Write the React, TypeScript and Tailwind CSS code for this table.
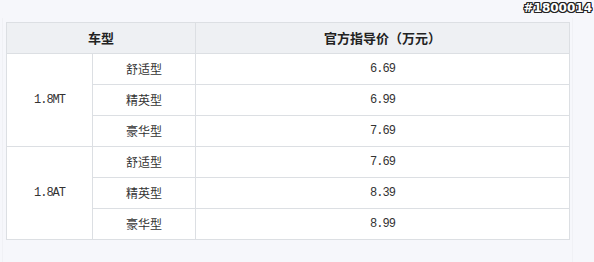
import React from "react";

const groups = [
  { name: "1.8MT", rows: [["舒适型", "6.69"], ["精英型", "6.99"], ["豪华型", "7.69"]] },
  { name: "1.8AT", rows: [["舒适型", "7.69"], ["精英型", "8.39"], ["豪华型", "8.99"]] },
];

export default function App() {
  const cjk = { fontFamily: '"Noto Sans CJK SC", "Noto Sans", sans-serif' };
  const mono = { fontFamily: '"Liberation Mono", monospace' };
  return (
    <div className="w-[594px] h-[262px] bg-[#f6f7fb] relative overflow-hidden">
      <div className="absolute left-[2px] top-[18px] bottom-0 w-px bg-[#f0f1f5]" />
      <div className="absolute left-[572px] top-[18px] bottom-0 w-px bg-[#f0f1f5]" />
      <div
        className="absolute right-[2px] top-[2px] text-[12px] font-bold text-white leading-none [text-shadow:1px_0_0_#222,-1px_0_0_#222,0_1px_0_#222,0_-1px_0_#222,1px_1px_0_#222,-1px_-1px_0_#222,1px_-1px_0_#222,-1px_1px_0_#222]"
        style={{ fontFamily: '"DejaVu Sans", sans-serif' }}
      >
        #1800014
      </div>
      <div className="pt-[22px] pl-[6px] relative">
        <table className="border-collapse w-[564px] text-[#333] table-fixed">
          <colgroup>
            <col className="w-[86px]" />
            <col className="w-[103px]" />
            <col />
          </colgroup>
          <thead>
            <tr className="h-[31px] bg-[#eef0f3]">
              <th colSpan={2} className="border border-[#dcdfe3] text-[13px] font-bold p-0 text-[#222]" style={cjk}>
                车型
              </th>
              <th className="border border-[#dcdfe3] text-[13px] font-bold p-0 text-[#222]" style={cjk}>
                官方指导价（万元）
              </th>
            </tr>
          </thead>
          <tbody className="bg-white">
            {groups.map((g) =>
              g.rows.map((r, i) => (
                <tr key={g.name + i} className="h-[31px]">
                  {i === 0 && (
                    <td rowSpan={3} className="border border-[#dcdfe3] text-center text-[12px] tracking-[-1px] p-0" style={mono}>
                      {g.name}
                    </td>
                  )}
                  <td className="border border-[#dcdfe3] text-center text-[12px] p-0" style={cjk}>
                    {r[0]}
                  </td>
                  <td className="border border-[#dcdfe3] text-center text-[12px] tracking-[-1px] p-0" style={mono}>
                    {r[1]}
                  </td>
                </tr>
              ))
            )}
          </tbody>
        </table>
      </div>
    </div>
  );
}
